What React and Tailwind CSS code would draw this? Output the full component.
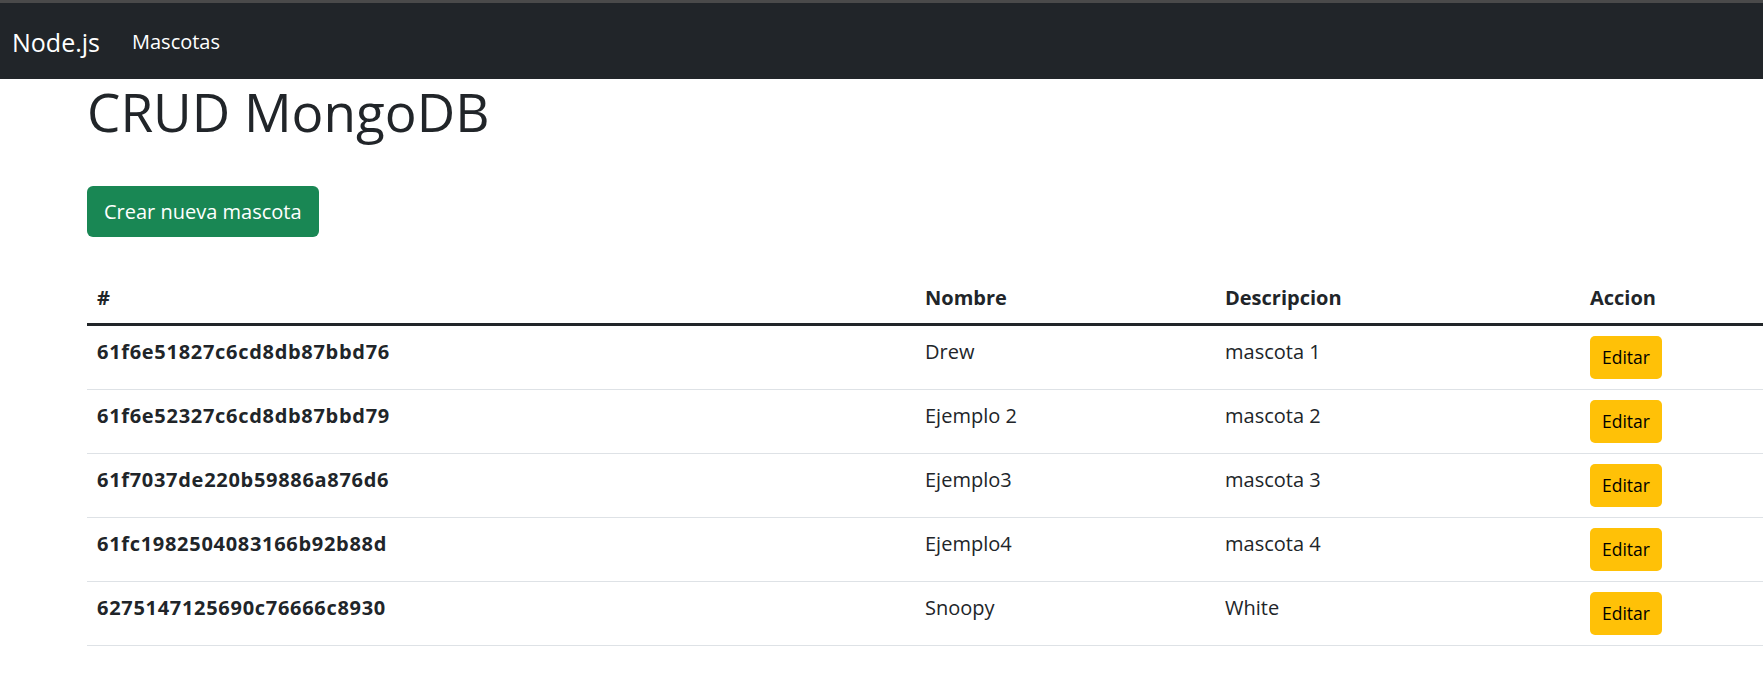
import React from 'react';

const mascotas = [
    { id: '61f6e51827c6cd8db87bbd76', nombre: 'Drew', descripcion: 'mascota 1' },
    { id: '61f6e52327c6cd8db87bbd79', nombre: 'Ejemplo 2', descripcion: 'mascota 2' },
    { id: '61f7037de220b59886a876d6', nombre: 'Ejemplo3', descripcion: 'mascota 3' },
    { id: '61fc1982504083166b92b88d', nombre: 'Ejemplo4', descripcion: 'mascota 4' },
    { id: '6275147125690c76666c8930', nombre: 'Snoopy', descripcion: 'White' },
];

const App = () => {
    return (
        <div className="min-h-[686px] w-full overflow-hidden bg-white text-[#212529] font-['Open_Sans','Noto_Sans',sans-serif]">
            {/* --- Navbar --- */}
            <div className="h-[3px] bg-[#4a4a4a]"></div>
            <nav className="flex h-[76px] items-center bg-[#212529] px-[12px] pt-[2px] text-white">
                <a className="text-[25px] leading-none">Node.js</a>
                <a className="ml-[32px] text-[20px] leading-none">Mascotas</a>
            </nav>

            {/* --- Content --- */}
            <div className="pl-[87px]">
                <h1 className="mt-[2px] text-[53px] font-normal leading-[62px]">CRUD MongoDB</h1>

                <button className="mt-[43px] h-[51px] rounded-[6px] bg-[#198754] px-[17px] text-[20px] text-white">
                    Crear nueva mascota
                </button>

                <table className="mt-[36px] w-[1720px] border-collapse text-left text-[20px]">
                    <thead>
                        <tr className="border-b-[3px] border-[#212529]">
                            <th className="w-[828px] px-[10px] py-[10px] align-top font-bold leading-[30px]">#</th>
                            <th className="w-[300px] px-[10px] py-[10px] align-top font-bold leading-[30px]">Nombre</th>
                            <th className="w-[365px] px-[10px] py-[10px] align-top font-bold leading-[30px]">Descripcion</th>
                            <th className="px-[10px] py-[10px] align-top font-bold leading-[30px]">Accion</th>
                        </tr>
                    </thead>
                    <tbody>
                        {mascotas.map(m => (
                            <tr key={m.id} className="border-b border-[#dee2e6]">
                                <th className="px-[10px] pt-[11px] pb-[9px] align-top font-bold leading-[30px] tracking-[0.7px]">{m.id}</th>
                                <td className="px-[10px] pt-[11px] pb-[9px] align-top leading-[30px]">{m.nombre}</td>
                                <td className="px-[10px] pt-[11px] pb-[9px] align-top leading-[30px]">{m.descripcion}</td>
                                <td className="px-[10px] py-[10px] align-top">
                                    <button className="h-[43px] w-[72px] rounded-[5px] bg-[#ffc107] text-[17.5px] text-black">
                                        Editar
                                    </button>
                                </td>
                            </tr>
                        ))}
                    </tbody>
                </table>
            </div>
        </div>
    );
};

export default App;
